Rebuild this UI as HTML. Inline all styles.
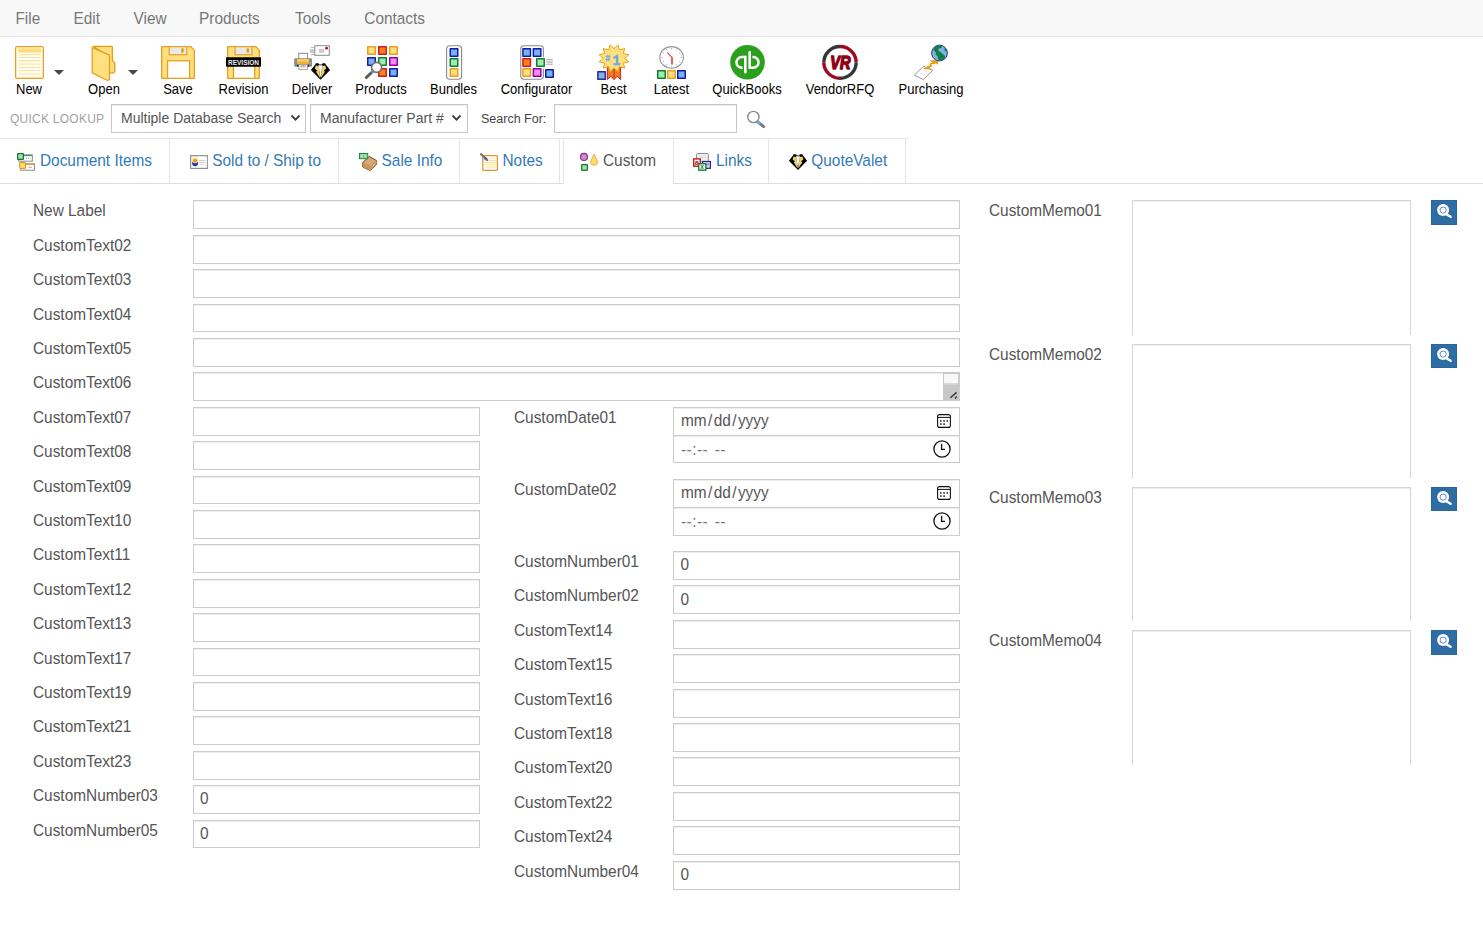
<!DOCTYPE html><html lang="en"><head><meta charset="utf-8"><title>Custom</title><style>
*{box-sizing:border-box}
html,body{margin:0;padding:0}
body{width:1483px;height:935px;overflow:hidden;background:#fff;position:relative;font-family:"Liberation Sans",sans-serif;font-size:15.4px;color:#555}
.abs{position:absolute}
.t{position:absolute;white-space:nowrap;display:block;margin:0;padding:0;font-weight:normal;text-decoration:none}
#menubar{position:absolute;left:0;top:0;width:1483px;height:37px;background:#f8f8f8;border-bottom:1px solid #e3e3e3}
.mi{font-size:15.4px;color:#777}
.tb{font-size:13px;color:#000}
.caret{position:absolute;width:0;height:0;border-left:5px solid transparent;border-right:5px solid transparent;border-top:5px solid #4a4a4a}
.ql{font-size:12px;color:#a2a2a2;letter-spacing:.25px}
.sel{position:absolute;top:104px;height:29px;border:1px solid #c6c6c6;border-radius:0;background:#fff;box-shadow:inset 0 1px 1px rgba(0,0,0,.075)}
.st{font-size:14px;color:#555}
.sf{font-size:12.5px;color:#444}
#sfi{position:absolute;left:554px;top:104px;width:183px;height:29px;border:1px solid #c6c6c6;border-radius:0;background:#fff;box-shadow:inset 0 1px 1px rgba(0,0,0,.075)}
#tabs-top{position:absolute;left:0;top:138px;width:908px;height:1px;background:#e4e4e4}
#tabs-bot{position:absolute;left:0;top:183px;width:1483px;height:1px;background:#ddd}
.vsep{position:absolute;top:139px;width:1px;height:44px;background:#e4e4e4}
.tab{font-size:15.4px;color:#337ab7}
.act{color:#555}
.lbl{font-size:15.4px;color:#555}
.inp{position:absolute;height:29px;border:1px solid #ccc;background:#fff;box-shadow:inset 0 1px 1px rgba(0,0,0,.075)}
.iv{font-size:15.4px;color:#555}
.sl{padding:0 1.4px}
.tm{color:#757575;word-spacing:2px;letter-spacing:.45px}
.memo{position:absolute;width:279px;border:1px solid #d9d5d5;border-bottom:none;background:#fff;box-shadow:inset 0 1px 1px rgba(0,0,0,.075)}
.mbtn{position:absolute;left:1431px;width:26px;height:24.3px;background:#2e6da4;border:1px solid #2a659b;overflow:hidden}
.mbtn svg{position:absolute;left:-1px;top:-1px}
</style></head><body>
<nav id="menu"><div id="menubar"></div>
<a class="t mi" style="left:15.4px;top:9.66px;line-height:18px;transform-origin:0 14.34px;transform:scaleY(1.088);">File</a>
<a class="t mi" style="left:73.5px;top:9.66px;line-height:18px;transform-origin:0 14.34px;transform:scaleY(1.088);">Edit</a>
<a class="t mi" style="left:133.5px;top:9.66px;line-height:18px;transform-origin:0 14.34px;transform:scaleY(1.088);">View</a>
<a class="t mi" style="left:199px;top:9.66px;line-height:18px;transform-origin:0 14.34px;transform:scaleY(1.088);">Products</a>
<a class="t mi" style="left:295px;top:9.66px;line-height:18px;transform-origin:0 14.34px;transform:scaleY(1.088);">Tools</a>
<a class="t mi" style="left:364.3px;top:9.66px;line-height:18px;transform-origin:0 14.34px;transform:scaleY(1.088);">Contacts</a>
</nav><section id="toolbar">
<svg class="abs" style="left:10px;top:42px" width="40" height="42" viewBox="10 42 40 42"><rect x="15.7" y="46.7" width="27.6" height="31.6" rx="1.2" fill="#fff" stroke="#E5A024" stroke-width="1.4"/><rect x="16.8" y="47.8" width="25.4" height="29.4" fill="none" stroke="#FCEBC2" stroke-width="0.9"/><rect x="18.2" y="48.4" width="22.8" height="4.2" fill="#FFDD77"/><rect x="18.6" y="53.90" width="22" height="1.0" fill="#FFE08A"/><rect x="18.6" y="57.00" width="22" height="1.0" fill="#FFDD77"/><rect x="18.6" y="60.05" width="22" height="1.5" fill="#FFE596"/><rect x="18.6" y="63.35" width="22" height="1.5" fill="#FFE9A8"/><rect x="18.6" y="66.90" width="22" height="1.0" fill="#FFDD77"/><rect x="18.6" y="70.05" width="22" height="1.1" fill="#FFE392"/><rect x="18.6" y="73.15" width="22" height="1.7" fill="#FFEDB5"/></svg>
<div class="t tb" style="left:29px;top:82.00px;line-height:15px;transform-origin:0 12.00px;transform:translateX(-50%) scaleY(1.075);">New</div>
<svg class="abs" style="left:86px;top:42px" width="36" height="42" viewBox="86 42 36 42"><path d="M93.2 46.4 H111.4 Q112.4 46.4 112.4 47.4 V60.6 L114.8 63 V71.6 L113.6 72.8 H108 V56 Z" fill="#FFDF7E" stroke="#E59E10" stroke-width="1.3" stroke-linejoin="round"/><path d="M92.2 47.6 L109.5 55.2 V79.6 L107.4 80.5 L92.2 72.8 Z" fill="#FFDF7E" stroke="#E5A024" stroke-width="1.3" stroke-linejoin="round"/></svg>
<div class="t tb" style="left:104px;top:82.00px;line-height:15px;transform-origin:0 12.00px;transform:translateX(-50%) scaleY(1.075);">Open</div>
<svg class="abs" style="left:158px;top:42px" width="42" height="42" viewBox="158 42 42 42"><path d="M161.65 46.65 H190.80 L194.35 50.40 V78.35 H161.65 Z" fill="#FFDF7E" stroke="#E5A024" stroke-width="1.3" stroke-linejoin="round"/><rect x="169.30" y="46.65" width="17.40" height="8.1" fill="#E8E8E8" stroke="#E5A024" stroke-width="1.2"/><rect x="181.20" y="48.3" width="2.50" height="4.5" rx="1" fill="#E59E00"/><rect x="167.60" y="60.8" width="22.00" height="17.55" fill="#fff" stroke="#E5A024" stroke-width="1.3"/></svg>
<div class="t tb" style="left:178px;top:82.00px;line-height:15px;transform-origin:0 12.00px;transform:translateX(-50%) scaleY(1.075);">Save</div>
<svg class="abs" style="left:222px;top:42px" width="44" height="42" viewBox="222 42 44 42"><path d="M227.65 46.65 H255.92 L259.35 50.40 V78.35 H227.65 Z" fill="#FFDF7E" stroke="#E5A024" stroke-width="1.3" stroke-linejoin="round"/><rect x="235.06" y="46.65" width="16.89" height="8.1" fill="#E8E8E8" stroke="#E5A024" stroke-width="1.2"/><rect x="246.61" y="48.3" width="2.43" height="4.5" rx="1" fill="#E59E00"/><rect x="233.41" y="60.8" width="21.35" height="17.55" fill="#fff" stroke="#E5A024" stroke-width="1.3"/><rect x="226" y="57.2" width="35" height="9.6" rx="0.8" fill="#000"/><text x="243.5" y="64.8" font-family="Liberation Sans, sans-serif" font-weight="bold" font-size="7.6" fill="#eee" text-anchor="middle" textLength="31" lengthAdjust="spacingAndGlyphs">REVISION</text></svg>
<div class="t tb" style="left:243.5px;top:82.00px;line-height:15px;transform-origin:0 12.00px;transform:translateX(-50%) scaleY(1.075);">Revision</div>
<svg class="abs" style="left:290px;top:42px" width="44" height="42" viewBox="290 42 44 42"><rect x="311" y="46.9" width="3.6" height="0.9" fill="#aaa"/><rect x="309.8" y="49.2" width="4.8" height="3.6" fill="#c4c4c4"/><rect x="311" y="54" width="3.6" height="0.9" fill="#aaa"/><rect x="314.8" y="45.7" width="14.5" height="9.6" fill="#fff" stroke="#8a8a8e" stroke-width="1"/><rect x="319" y="49.2" width="5.2" height="3.6" fill="#c0c0c0"/><rect x="319" y="50.3" width="5.2" height="0.5" fill="#e0e0e0"/><rect x="319" y="51.5" width="5.2" height="0.5" fill="#e0e0e0"/><circle cx="326.6" cy="48.2" r="1.4" fill="#CC0010"/><rect x="298.8" y="53.3" width="8.8" height="6" fill="#fff" stroke="#8a8a8e" stroke-width="1"/><rect x="294.2" y="58.2" width="17.8" height="8.6" rx="1.2" fill="#8a8a8e"/><rect x="297" y="59.2" width="12" height="4.4" fill="#FFD255"/><rect x="297" y="61.6" width="12" height="2" fill="#EDB02A"/><rect x="297" y="59.2" width="12" height="1" fill="#F5C850"/><rect x="309.9" y="61.8" width="1" height="2" fill="#8FD6A0"/><rect x="298.9" y="64.6" width="8.6" height="5" fill="#fff" stroke="#9a9a9e" stroke-width="0.8"/><rect x="297" y="64.9" width="1.5" height="1.6" fill="#222"/><rect x="307.6" y="64.9" width="1.5" height="1.6" fill="#222"/><rect x="300.6" y="65" width="1" height="2.4" fill="#4AA0E0"/><rect x="302" y="65" width="1" height="2.4" fill="#F5C030"/><rect x="303.3" y="65" width="1.2" height="2.4" fill="#F57020"/><rect x="304.9" y="65" width="0.8" height="2.4" fill="#F0A0D0"/><path d="M310.9 70.07052631578946 L315.2452631578947 64.51263157894736 Q315.44736842105266 63.0978947368421 316.66 63.3 L318.07473684210527 63.3 Q318.8831578947368 63.40105263157894 319.08526315789476 64.51263157894736 L321.91473684210524 64.51263157894736 Q322.1168421052632 63.40105263157894 322.92526315789473 63.3 L324.34 63.3 Q325.55263157894734 63.0978947368421 325.7547368421053 64.51263157894736 L330.1 70.07052631578946 L320.5 79.8 Z" fill="#000"/><path d="M315.7505263157895 65.62421052631579 L318.58 66.02842105263157 L320.2978947368421 78.2557894736842 L315.9526315789474 71.78842105263158 L317.3673684210526 70.67684210526315 L314.841052631579 68.75684210526316 Z" fill="#F2D262"/><path d="M325.2494736842105 65.62421052631579 L322.42 66.02842105263157 L320.7021052631579 78.2557894736842 L325.0473684210526 71.78842105263158 L323.6326315789474 70.67684210526315 L326.158947368421 68.75684210526316 Z" fill="#F2D262"/><path d="M318.3778947368421 65.32105263157895 L322.6221052631579 65.32105263157895 L320.6515789473684 77.04315789473684 L320.3484210526316 77.04315789473684 Z" fill="#fff"/><path d="M320.5 67.34210526315789 V72.39473684210526" stroke="#e2e2e2" stroke-width="0.35368421052631577"/></svg>
<div class="t tb" style="left:312px;top:82.00px;line-height:15px;transform-origin:0 12.00px;transform:translateX(-50%) scaleY(1.075);">Deliver</div>
<svg class="abs" style="left:362px;top:42px" width="40" height="42" viewBox="362 42 40 42"><rect x="367.75" y="46.75" width="7.5" height="7.5" fill="#FFDF7E" stroke="#E5A024" stroke-width="1.5" stroke-linejoin="round"/><rect x="378.75" y="46.75" width="7.5" height="7.5" fill="#FF7F1E" stroke="#D0201A" stroke-width="1.5" stroke-linejoin="round"/><rect x="389.75" y="46.75" width="7.5" height="7.5" fill="#FFDF7E" stroke="#E5A024" stroke-width="1.5" stroke-linejoin="round"/><rect x="367.75" y="57.75" width="7.5" height="7.5" fill="#6FB4F5" stroke="#1A1AA0" stroke-width="1.5" stroke-linejoin="round"/><rect x="378.75" y="57.75" width="7.5" height="7.5" fill="#9EEDB0" stroke="#0F7F35" stroke-width="1.5" stroke-linejoin="round"/><rect x="389.75" y="57.75" width="7.5" height="7.5" fill="#F58CF5" stroke="#990099" stroke-width="1.5" stroke-linejoin="round"/><rect x="378.75" y="68.75" width="7.5" height="7.5" fill="#FF7F1E" stroke="#D0201A" stroke-width="1.5" stroke-linejoin="round"/><rect x="389.75" y="68.75" width="7.5" height="7.5" fill="#6FB4F5" stroke="#1A1AA0" stroke-width="1.5" stroke-linejoin="round"/><path d="M373.4 70.8 L366.2 77.6" stroke="#625a5a" stroke-width="2.9" stroke-linecap="round"/><path d="M373.6 70.6 L371.6 72.5" stroke="#5AB0E8" stroke-width="2.2"/><circle cx="376.6" cy="67.4" r="5.05" fill="#fff" stroke="#767272" stroke-width="1.7"/></svg>
<div class="t tb" style="left:381px;top:82.00px;line-height:15px;transform-origin:0 12.00px;transform:translateX(-50%) scaleY(1.075);">Products</div>
<svg class="abs" style="left:440px;top:42px" width="28" height="42" viewBox="440 42 28 42"><rect x="446.6" y="45.7" width="15" height="33.6" rx="3.2" fill="#fff" stroke="#8a8a8e" stroke-width="1.1"/><rect x="450.25" y="48.75" width="7.5" height="7.5" fill="#6FB4F5" stroke="#1A1AA0" stroke-width="1.5" stroke-linejoin="round"/><rect x="450.25" y="58.75" width="7.5" height="7.5" fill="#9EEDB0" stroke="#0F7F35" stroke-width="1.5" stroke-linejoin="round"/><rect x="450.25" y="68.75" width="7.5" height="7.5" fill="#FFDF7E" stroke="#E5A024" stroke-width="1.5" stroke-linejoin="round"/></svg>
<div class="t tb" style="left:453.5px;top:82.00px;line-height:15px;transform-origin:0 12.00px;transform:translateX(-50%) scaleY(1.075);">Bundles</div>
<svg class="abs" style="left:516px;top:42px" width="42" height="42" viewBox="516 42 42 42"><rect x="520.8" y="45.7" width="22.6" height="33.6" rx="3.2" fill="#fff" stroke="#8a8a8e" stroke-width="1.1"/><rect x="542" y="57" width="4" height="11.5" fill="#fff"/><rect x="522.95" y="48.75" width="7.5" height="7.5" fill="#6FB4F5" stroke="#1A1AA0" stroke-width="1.5" stroke-linejoin="round"/><rect x="533.35" y="48.75" width="7.5" height="7.5" fill="#6FB4F5" stroke="#1A1AA0" stroke-width="1.5" stroke-linejoin="round"/><rect x="522.95" y="58.75" width="7.5" height="7.5" fill="#FF7F1E" stroke="#D0201A" stroke-width="1.5" stroke-linejoin="round"/><rect x="536.75" y="58.75" width="7.5" height="7.5" fill="#9EEDB0" stroke="#0F7F35" stroke-width="1.5" stroke-linejoin="round"/><rect x="522.95" y="68.75" width="7.5" height="7.5" fill="#FFDF7E" stroke="#E5A024" stroke-width="1.5" stroke-linejoin="round"/><rect x="533.35" y="68.75" width="7.5" height="7.5" fill="#F58CF5" stroke="#990099" stroke-width="1.5" stroke-linejoin="round"/><rect x="545.75" y="69.75" width="7.5" height="7.5" fill="#6FB4F5" stroke="#1A1AA0" stroke-width="1.5" stroke-linejoin="round"/><rect x="546.2" y="59.2" width="6.6" height="1" fill="#aaa"/><rect x="546.2" y="60.6" width="6.6" height="2.8" fill="#d0d0d0"/><rect x="546.2" y="63.8" width="6.6" height="1" fill="#b4b4b4"/></svg>
<div class="t tb" style="left:536.5px;top:82.00px;line-height:15px;transform-origin:0 12.00px;transform:translateX(-50%) scaleY(1.075);">Configurator</div>
<svg class="abs" style="left:594px;top:42px" width="40" height="42" viewBox="594 42 40 42"><path d="M607.4 66 V79.6 L610.7 76.2 L614 79.6 L617.3 76.2 L620.6 79.6 V66 Z" fill="#F07A22" stroke="#CC2020" stroke-width="1" stroke-linejoin="miter"/><rect x="613.3" y="68" width="1.5" height="10" fill="#D9402A"/><polygon points="617.99,44.97 619.30,49.90 624.89,48.54 623.18,53.45 628.88,54.73 624.60,58.30 628.88,61.87 623.18,63.15 624.89,68.06 619.30,66.70 617.99,71.63 614.00,68.00 610.01,71.63 608.70,66.70 603.11,68.06 604.82,63.15 599.12,61.87 603.40,58.30 599.12,54.73 604.82,53.45 603.11,48.54 608.70,49.90 610.01,44.97 614.00,48.60" fill="#FFE07E" stroke="#E8A317" stroke-width="1" stroke-linejoin="miter"/><text x="605.2" y="60.6" font-family="Liberation Mono, monospace" font-weight="bold" font-size="8.4" fill="#6AA8E8" stroke="#6AA8E8" stroke-width="0.3">#</text><text x="612.4" y="64.7" font-family="Liberation Mono, monospace" font-weight="bold" font-size="15.2" fill="#6AA8E8" stroke="#6AA8E8" stroke-width="0.5" textLength="7.8" lengthAdjust="spacingAndGlyphs">1</text><rect x="597.85" y="71.75" width="7.5" height="7.5" fill="#7BB3E6" stroke="#2B2B8F" stroke-width="1.5" stroke-linejoin="round"/></svg>
<div class="t tb" style="left:613.5px;top:82.00px;line-height:15px;transform-origin:0 12.00px;transform:translateX(-50%) scaleY(1.075);">Best</div>
<svg class="abs" style="left:652px;top:42px" width="40" height="42" viewBox="652 42 40 42"><ellipse cx="671.6" cy="57.4" rx="11.8" ry="10.8" fill="#fff" stroke="#999" stroke-width="1.15"/><path d="M671.60 49.17 L671.60 48.19" stroke="#8c8c8c" stroke-width="0.9"/><path d="M676.09 50.27 L676.63 49.42" stroke="#8c8c8c" stroke-width="0.9"/><path d="M679.38 53.28 L680.31 52.79" stroke="#8c8c8c" stroke-width="0.9"/><path d="M680.59 57.40 L681.66 57.40" stroke="#8c8c8c" stroke-width="0.9"/><path d="M679.38 61.52 L680.31 62.01" stroke="#8c8c8c" stroke-width="0.9"/><path d="M676.09 64.53 L676.63 65.38" stroke="#8c8c8c" stroke-width="0.9"/><path d="M671.60 65.63 L671.60 66.61" stroke="#8c8c8c" stroke-width="0.9"/><path d="M667.11 64.53 L666.57 65.38" stroke="#8c8c8c" stroke-width="0.9"/><path d="M663.82 61.52 L662.89 62.01" stroke="#8c8c8c" stroke-width="0.9"/><path d="M662.61 57.40 L661.54 57.40" stroke="#8c8c8c" stroke-width="0.9"/><path d="M663.82 53.28 L662.89 52.79" stroke="#8c8c8c" stroke-width="0.9"/><path d="M667.11 50.27 L666.57 49.42" stroke="#8c8c8c" stroke-width="0.9"/><path d="M672 57.2 V64.6" stroke="#D9534F" stroke-width="1.8"/><path d="M672.2 57.6 L667.2 52.4" stroke="#D9534F" stroke-width="1.2"/><rect x="657.75" y="70.75" width="7.5" height="7.5" fill="#9EEDB0" stroke="#0F7F35" stroke-width="1.5" stroke-linejoin="round"/><rect x="667.75" y="70.75" width="7.5" height="7.5" fill="#FFDF7E" stroke="#E5A024" stroke-width="1.5" stroke-linejoin="round"/><rect x="677.75" y="70.75" width="7.5" height="7.5" fill="#6FB4F5" stroke="#1A1AA0" stroke-width="1.5" stroke-linejoin="round"/></svg>
<div class="t tb" style="left:671.5px;top:82.00px;line-height:15px;transform-origin:0 12.00px;transform:translateX(-50%) scaleY(1.075);">Latest</div>
<svg class="abs" style="left:728px;top:42px" width="40" height="42" viewBox="728 42 40 42"><circle cx="747.5" cy="62.2" r="17.3" fill="#2CA01C"/><path d="M745.3 57 H741.8 A5.35 5.35 0 0 0 741.8 67.7 H742.6" fill="none" stroke="#fff" stroke-width="2.5"/><path d="M745.3 55.75 V72.2" stroke="#fff" stroke-width="2.6"/><circle cx="745.3" cy="72.2" r="1.3" fill="#fff"/><path d="M749.7 67.7 H753.2 A5.35 5.35 0 0 0 753.2 57 H752.4" fill="none" stroke="#fff" stroke-width="2.5"/><path d="M749.7 52.4 V68.95" stroke="#fff" stroke-width="2.6"/><circle cx="749.7" cy="52.4" r="1.3" fill="#fff"/></svg>
<div class="t tb" style="left:747px;top:82.00px;line-height:15px;transform-origin:0 12.00px;transform:translateX(-50%) scaleY(1.075);">QuickBooks</div>
<svg class="abs" style="left:820px;top:42px" width="40" height="42" viewBox="820 42 40 42"><path d="M823.85 62.4 A16.15 15.85 0 0 1 840.0 46.55" fill="none" stroke="#333638" stroke-width="3.4"/><path d="M840.0 46.55 A16.15 15.85 0 0 1 856.15 62.4" fill="none" stroke="#9E0B20" stroke-width="3.4"/><path d="M856.15 62.4 A16.15 15.85 0 0 1 840.0 78.25" fill="none" stroke="#333638" stroke-width="3.4"/><path d="M840.0 78.25 A16.15 15.85 0 0 1 823.85 62.4" fill="none" stroke="#9E0B20" stroke-width="3.4"/><text x="840.3" y="68.7" font-family="Liberation Sans, sans-serif" font-weight="bold" font-style="italic" font-size="17.6" fill="#8E0012" stroke="#8E0012" stroke-width="1.5" stroke-linejoin="round" text-anchor="middle" textLength="20.2" lengthAdjust="spacingAndGlyphs">VR</text></svg>
<div class="t tb" style="left:840px;top:82.00px;line-height:15px;transform-origin:0 12.00px;transform:translateX(-50%) scaleY(1.075);">VendorRFQ</div>
<svg class="abs" style="left:910px;top:42px" width="42" height="42" viewBox="910 42 42 42"><path d="M923.8 66.2 L932.8 70.4 L923.2 79.5 L914.3 75.2 Z" fill="#fff" stroke="#8a8a8a" stroke-width="0.9" stroke-linejoin="round"/><path d="M923.6 71 L927.4 72.6 M921.6 73 L925 74.6" stroke="#ddd" stroke-width="0.8"/><path d="M924.4 68.5 H929.9 L927.8 66.7 L931.4 66 L930 64.1 L934.2 62.6" fill="none" stroke="#E59E0F" stroke-width="1.5" stroke-linejoin="round" stroke-linecap="round"/><path d="M929.3 60.2 H938 V64.9 L935.8 63.2 L933.2 64.4 L932 61.9 Z" fill="#E59E0F"/><circle cx="939.5" cy="53" r="7.9" fill="#7EB2E4" stroke="#22228B" stroke-width="0.9"/><path d="M933.2 50 Q934.5 46.5 938.5 45.6 L942 46 L941.5 48 L938.8 48.6 L938.2 50.6 L941 52.6 L944.6 55.6 L945.4 57.6 L943 59.6 L940 60.6 L938 59 L937.6 56 L935.6 54.8 L936 52.4 Z" fill="#0E8040"/><path d="M944.6 47.6 L946.6 50.2 L946 52 L944.4 50 Z" fill="#0E8040"/></svg>
<div class="t tb" style="left:931px;top:82.00px;line-height:15px;transform-origin:0 12.00px;transform:translateX(-50%) scaleY(1.075);">Purchasing</div>
<div class="caret" style="left:54px;top:70px"></div><div class="caret" style="left:128px;top:70px"></div>
</section><section id="quick-lookup">
<div class="t ql" style="left:10px;top:111.84px;line-height:14px;transform-origin:0 11.16px;transform:scaleY(1.047);">QUICK LOOKUP</div>
<div class="sel" style="left:111px;width:195px"></div><div class="t st" style="left:121px;top:110.15px;line-height:16px;transform-origin:0 12.85px;transform:none;">Multiple Database Search</div><svg class="abs" width="11" height="8" viewBox="0 0 11 8" style="left:290.3px;top:114px"><path d="M1.5 1.5 L5.5 5.7 L9.5 1.5" fill="none" stroke="#444" stroke-width="1.9"/></svg>
<div class="sel" style="left:310px;width:158px"></div><div class="t st" style="left:320px;top:110.15px;line-height:16px;transform-origin:0 12.85px;transform:none;">Manufacturer Part #</div><svg class="abs" width="11" height="8" viewBox="0 0 11 8" style="left:451.3px;top:114px"><path d="M1.5 1.5 L5.5 5.7 L9.5 1.5" fill="none" stroke="#444" stroke-width="1.9"/></svg>
<div class="t sf" style="left:481px;top:111.67px;line-height:14px;transform-origin:0 11.33px;transform:none;">Search For:</div><div id="sfi"></div>
<svg class="abs" style="left:745px;top:108px" width="24" height="24" viewBox="745 108 24 24"><path d="M757.8 121.8 L763.6 126.6" stroke="#7a7a7a" stroke-width="3" stroke-linecap="round"/><path d="M757.3 121.4 L760 123.7" stroke="#5AB0F0" stroke-width="3"/><circle cx="753.4" cy="117" r="5.6" fill="#fff" stroke="#888" stroke-width="1.4"/></svg>
</section><nav id="tabs">
<div id="tabs-top"></div><div id="tabs-bot"></div>
<div class="vsep" style="left:169px"></div>
<div class="vsep" style="left:338px"></div>
<div class="vsep" style="left:459px"></div>
<div class="vsep" style="left:559px"></div>
<div class="vsep" style="left:563px"></div>
<div class="vsep" style="left:673px"></div>
<div class="vsep" style="left:768px"></div>
<div class="vsep" style="left:905px"></div>
<div class="abs" style="left:564px;top:183px;width:109px;height:1px;background:#fff"></div>
<svg class="abs" style="left:14px;top:150px" width="24" height="24" viewBox="14 150 24 24"><rect x="18.7" y="154.8" width="13.6" height="6.4" fill="#fff" stroke="#8a888a" stroke-width="1"/><rect x="24" y="155.1" width="7.8" height="1" fill="#2E8B50"/><rect x="26" y="157.8" width="1" height="1.2" fill="#aaa"/><rect x="28" y="157.8" width="1.6" height="1.2" fill="#bbb"/><rect x="17.6" y="153.6" width="5.8" height="5.8" rx="0.6" fill="#A8DDB0" stroke="#0B7A2A" stroke-width="1.2"/><rect x="20.8" y="163.8" width="13.6" height="6.4" fill="#fff" stroke="#8a888a" stroke-width="1"/><rect x="26" y="164.1" width="7.8" height="1" fill="#E5A024"/><rect x="28.4" y="166.8" width="3.4" height="1.2" fill="#bbb"/><rect x="19.7" y="162.6" width="5.8" height="5.8" rx="0.6" fill="#FFDF7E" stroke="#E5A024" stroke-width="1.2"/></svg>
<a class="t tab" style="left:40px;top:151.66px;line-height:18px;transform-origin:0 14.34px;transform:scaleY(1.088);">Document Items</a>
<svg class="abs" style="left:186px;top:150px" width="26" height="24" viewBox="186 150 26 24"><rect x="190.6" y="155.7" width="16.7" height="12.7" fill="#f6f6f6" stroke="#8a888a" stroke-width="1.1"/><rect x="198.2" y="156.8" width="8.4" height="10.4" fill="#fff"/><path d="M192 162.2 H198.2 A3.1 4.1 0 0 1 192 162.2 Z" fill="#2F2F9F"/><ellipse cx="195.1" cy="162.6" rx="1.6" ry="0.8" fill="#9FD0F5"/><ellipse cx="195.1" cy="160.2" rx="2.9" ry="2.5" fill="#FFD75E"/><ellipse cx="195.1" cy="160.6" rx="2" ry="1.5" fill="#E5961F"/><rect x="199.2" y="160" width="6.6" height="0.9" fill="#ccc"/><rect x="199.2" y="162.1" width="6.6" height="0.9" fill="#ccc"/><rect x="199.2" y="164.2" width="6.6" height="0.9" fill="#ddd"/></svg>
<a class="t tab" style="left:212.3px;top:151.66px;line-height:18px;transform-origin:0 14.34px;transform:scaleY(1.088);">Sold to / Ship to</a>
<svg class="abs" style="left:356px;top:150px" width="24" height="24" viewBox="356 150 24 24"><path d="M369.2 156.4 L376.6 160.6 V164.6 L370.2 170.5 L362.7 167 V162.6 Z" fill="#D9A778" stroke="#6B4A1E" stroke-width="1" stroke-linejoin="round"/><path d="M362.7 162.6 L370.2 166.4 V170.5 L362.7 167 Z" fill="#C99660"/><path d="M376.6 160.6 L370.2 166.4 V170.5 L376.6 164.6 Z" fill="#CE9A64"/><path d="M362.7 162.6 L370.2 166.4 L376.6 160.6" fill="none" stroke="#c08f5e" stroke-width="0.5"/><path d="M372.6 165.2 L374.8 163.2 V164.6 L372.6 166.6 Z" fill="#9EE8A8"/><rect x="359.5" y="153.5" width="8.2" height="5.2" fill="#8FD49A" stroke="#1A8A3A" stroke-width="1"/><ellipse cx="363.6" cy="156.2" rx="2.4" ry="1.6" fill="#C0F0C4"/><ellipse cx="363.6" cy="156.4" rx="0.9" ry="1.2" fill="#5AAE70"/></svg>
<a class="t tab" style="left:381.6px;top:151.66px;line-height:18px;transform-origin:0 14.34px;transform:scaleY(1.088);">Sale Info</a>
<svg class="abs" style="left:478px;top:150px" width="24" height="24" viewBox="478 150 24 24"><rect x="482.8" y="155.7" width="14.6" height="14.6" rx="0.8" fill="#fff" stroke="#E5962B" stroke-width="1.3"/><rect x="489.2" y="157.7" width="6.5" height="1" fill="#FFE596"/><rect x="489.2" y="159.9" width="6.5" height="1" fill="#FFE08A"/><rect x="484.9" y="162" width="10.8" height="1" fill="#FFDD77"/><rect x="484.9" y="164" width="10.8" height="1.2" fill="#FFE596"/><rect x="484.9" y="166" width="10.8" height="1.8" fill="#FFF0C4"/><path d="M481 154.2 L487 159.8" stroke="#7a7a7a" stroke-width="2.3" stroke-linecap="round"/><path d="M484.8 157.8 L486.4 159.3" stroke="#4040B0" stroke-width="2.3"/><path d="M486.5 159.4 L487.2 160" stroke="#7a7a7a" stroke-width="2.3" stroke-linecap="round"/></svg>
<a class="t tab" style="left:502.5px;top:151.66px;line-height:18px;transform-origin:0 14.34px;transform:scaleY(1.088);">Notes</a>
<svg class="abs" style="left:578px;top:150px" width="24" height="24" viewBox="578 150 24 24"><circle cx="584" cy="156.9" r="3.5" fill="#D08CC8" stroke="#8B2A8B" stroke-width="1.1"/><rect x="581.7" y="164.7" width="5.7" height="5.6" rx="0.5" fill="#A8DDB0" stroke="#0B7A2A" stroke-width="1.2"/><path d="M594.1 154.3 Q594.9 156.6 596.7 159.6 Q598.6 162.8 596.6 164.5 Q594.1 166 591.6 164.5 Q589.6 162.8 591.5 159.6 Q593.3 156.6 594.1 154.3 Z" fill="#FFDD6E" stroke="#E5A024" stroke-width="0.9"/></svg>
<a class="t tab act" style="left:603px;top:151.66px;line-height:18px;transform-origin:0 14.34px;transform:scaleY(1.088);">Custom</a>
<svg class="abs" style="left:690px;top:150px" width="24" height="24" viewBox="690 150 24 24"><rect x="696.6" y="153.5" width="11.7" height="8.4" rx="1" fill="#efefef" stroke="#8a888a" stroke-width="1"/><rect x="699" y="155.4" width="7" height="0.8" fill="#ddd"/><rect x="699" y="157.2" width="7" height="0.8" fill="#ddd"/><rect x="693.7" y="158.9" width="6.6" height="7.3" fill="#fff" stroke="#C01010" stroke-width="1.3"/><text x="694.8" y="165.2" font-family="Liberation Sans, sans-serif" font-weight="bold" font-size="7.5" fill="#C01010">a</text><rect x="702.6" y="161.5" width="7.8" height="6.8" fill="#dcdcf2" stroke="#22228B" stroke-width="1.2"/><path d="M706 164.8 H708.2 V163.2" fill="none" stroke="#6a6ab0" stroke-width="0.9"/><rect x="698.8" y="163.7" width="7.1" height="6.5" fill="#fff" stroke="#0B7A2A" stroke-width="1.3"/><text x="700.2" y="169.2" font-family="Liberation Sans, sans-serif" font-weight="bold" font-size="6.5" fill="#0B7A2A">x</text></svg>
<a class="t tab" style="left:716px;top:151.66px;line-height:18px;transform-origin:0 14.34px;transform:scaleY(1.088);">Links</a>
<svg class="abs" style="left:786px;top:150px" width="24" height="24" viewBox="786 150 24 24"><path d="M788.9 160.7178947368421 L793.0189473684211 155.44947368421055 Q793.2105263157895 154.1084210526316 794.36 154.3 L795.7010526315789 154.3 Q796.4673684210526 154.39578947368423 796.6589473684211 155.44947368421055 L799.3410526315789 155.44947368421055 Q799.5326315789474 154.39578947368423 800.2989473684211 154.3 L801.64 154.3 Q802.7894736842105 154.1084210526316 802.9810526315789 155.44947368421055 L807.1 160.7178947368421 L798 170.0 Z" fill="#000"/><path d="M793.4978947368421 156.50315789473686 L796.18 156.88631578947368 L797.8084210526316 168.47684210526316 L793.6894736842105 162.3463157894737 L795.0305263157895 161.29263157894738 L792.6357894736842 159.4726315789474 Z" fill="#F2D262"/><path d="M802.5021052631579 156.50315789473686 L799.82 156.88631578947368 L798.1915789473684 168.47684210526316 L802.3105263157895 162.3463157894737 L800.9694736842105 161.29263157894738 L803.3642105263158 159.4726315789474 Z" fill="#F2D262"/><path d="M795.9884210526316 156.21578947368423 L800.0115789473684 156.21578947368423 L798.1436842105263 167.32736842105265 L797.8563157894737 167.32736842105265 Z" fill="#fff"/><path d="M798 158.13157894736844 V162.92105263157896" stroke="#e2e2e2" stroke-width="0.3352631578947368"/></svg>
<a class="t tab" style="left:811.3px;top:151.66px;line-height:18px;transform-origin:0 14.34px;transform:scaleY(1.088);">QuoteValet</a>
</nav><main id="custom-form"><section id="col-left">
<label class="t lbl" style="left:33px;top:201.66px;line-height:18px;transform-origin:0 14.34px;transform:scaleY(1.088);">New Label</label>
<div class="inp" style="left:193px;top:200.4px;width:767px;height:28.8px"></div>
<label class="t lbl" style="left:33px;top:236.66px;line-height:18px;transform-origin:0 14.34px;transform:scaleY(1.088);">CustomText02</label>
<div class="inp" style="left:193px;top:234.8px;width:767px;height:28.8px"></div>
<label class="t lbl" style="left:33px;top:270.66px;line-height:18px;transform-origin:0 14.34px;transform:scaleY(1.088);">CustomText03</label>
<div class="inp" style="left:193px;top:269.2px;width:767px;height:28.8px"></div>
<label class="t lbl" style="left:33px;top:305.66px;line-height:18px;transform-origin:0 14.34px;transform:scaleY(1.088);">CustomText04</label>
<div class="inp" style="left:193px;top:303.6px;width:767px;height:28.8px"></div>
<label class="t lbl" style="left:33px;top:339.66px;line-height:18px;transform-origin:0 14.34px;transform:scaleY(1.088);">CustomText05</label>
<div class="inp" style="left:193px;top:338.0px;width:767px;height:28.8px"></div>
<label class="t lbl" style="left:33px;top:373.66px;line-height:18px;transform-origin:0 14.34px;transform:scaleY(1.088);">CustomText06</label>
<div class="inp" style="left:193px;top:372.4px;width:767px;height:28.8px"></div>
<label class="t lbl" style="left:33px;top:408.66px;line-height:18px;transform-origin:0 14.34px;transform:scaleY(1.088);">CustomText07</label>
<div class="inp" style="left:193px;top:406.8px;width:287px;height:28.8px"></div>
<label class="t lbl" style="left:33px;top:442.66px;line-height:18px;transform-origin:0 14.34px;transform:scaleY(1.088);">CustomText08</label>
<div class="inp" style="left:193px;top:441.2px;width:287px;height:28.8px"></div>
<label class="t lbl" style="left:33px;top:477.66px;line-height:18px;transform-origin:0 14.34px;transform:scaleY(1.088);">CustomText09</label>
<div class="inp" style="left:193px;top:475.6px;width:287px;height:28.8px"></div>
<label class="t lbl" style="left:33px;top:511.66px;line-height:18px;transform-origin:0 14.34px;transform:scaleY(1.088);">CustomText10</label>
<div class="inp" style="left:193px;top:510.0px;width:287px;height:28.8px"></div>
<label class="t lbl" style="left:33px;top:545.66px;line-height:18px;transform-origin:0 14.34px;transform:scaleY(1.088);">CustomText11</label>
<div class="inp" style="left:193px;top:544.4px;width:287px;height:28.8px"></div>
<label class="t lbl" style="left:33px;top:580.66px;line-height:18px;transform-origin:0 14.34px;transform:scaleY(1.088);">CustomText12</label>
<div class="inp" style="left:193px;top:578.8px;width:287px;height:28.8px"></div>
<label class="t lbl" style="left:33px;top:614.66px;line-height:18px;transform-origin:0 14.34px;transform:scaleY(1.088);">CustomText13</label>
<div class="inp" style="left:193px;top:613.2px;width:287px;height:28.8px"></div>
<label class="t lbl" style="left:33px;top:649.66px;line-height:18px;transform-origin:0 14.34px;transform:scaleY(1.088);">CustomText17</label>
<div class="inp" style="left:193px;top:647.6px;width:287px;height:28.8px"></div>
<label class="t lbl" style="left:33px;top:683.66px;line-height:18px;transform-origin:0 14.34px;transform:scaleY(1.088);">CustomText19</label>
<div class="inp" style="left:193px;top:682.0px;width:287px;height:28.8px"></div>
<label class="t lbl" style="left:33px;top:717.66px;line-height:18px;transform-origin:0 14.34px;transform:scaleY(1.088);">CustomText21</label>
<div class="inp" style="left:193px;top:716.4px;width:287px;height:28.8px"></div>
<label class="t lbl" style="left:33px;top:752.66px;line-height:18px;transform-origin:0 14.34px;transform:scaleY(1.088);">CustomText23</label>
<div class="inp" style="left:193px;top:750.8px;width:287px;height:28.8px"></div>
<label class="t lbl" style="left:33px;top:786.66px;line-height:18px;transform-origin:0 14.34px;transform:scaleY(1.088);">CustomNumber03</label>
<div class="inp" style="left:193px;top:785.2px;width:287px;height:28.8px"></div>
<div class="t iv" style="left:200px;top:789.66px;line-height:18px;transform-origin:0 14.34px;transform:scaleY(1.088);">0</div>
<label class="t lbl" style="left:33px;top:821.66px;line-height:18px;transform-origin:0 14.34px;transform:scaleY(1.088);">CustomNumber05</label>
<div class="inp" style="left:193px;top:819.6px;width:287px;height:28.8px"></div>
<div class="t iv" style="left:200px;top:824.66px;line-height:18px;transform-origin:0 14.34px;transform:scaleY(1.088);">0</div>
<svg class="abs" style="left:942px;top:372px" width="18" height="29" viewBox="942 372 18 29"><rect x="943" y="373" width="16" height="27" fill="#c8c8c8"/><rect x="944" y="374" width="14" height="9.4" fill="#f8f8f8"/><rect x="944" y="383.8" width="14" height="1" fill="#d6d6d6"/><path d="M950.4 397.8 L956.6 392.4 M955 398.6 L956.8 396.6" stroke="#3a3a3a" stroke-width="1.5"/></svg>
</section><section id="col-mid">
<label class="t lbl" style="left:514px;top:408.66px;line-height:18px;transform-origin:0 14.34px;transform:scaleY(1.088);">CustomDate01</label>
<div class="inp" style="left:673px;top:407.0px;width:287px;height:29px"></div>
<div class="inp" style="left:673px;top:435.0px;width:287px;height:28px"></div>
<div class="t iv" style="left:681px;top:411.66px;line-height:18px;transform-origin:0 14.34px;transform:scaleY(1.088);">mm<span class="sl">/</span>dd<span class="sl">/</span>yyyy</div>
<div class="t iv tm" style="left:681px;top:440.66px;line-height:18px;transform-origin:0 14.34px;transform:scaleY(1.088);">--:-- --</div>
<svg class="abs" style="left:937px;top:414.2px" width="14" height="14" viewBox="0 0 14 14"><rect x="0.6" y="0.6" width="12.8" height="12.8" rx="2" fill="none" stroke="#111" stroke-width="1.1"/><path d="M0.6 3.4 H13.4" stroke="#111" stroke-width="1"/><rect x="3.1" y="6.2" width="1.5" height="1.5" fill="#111"/><rect x="6.3" y="6.2" width="1.5" height="1.5" fill="#111"/><rect x="9.5" y="6.2" width="1.5" height="1.5" fill="#111"/><rect x="3.1" y="9.3" width="1.5" height="1.5" fill="#111"/><rect x="6.3" y="9.3" width="1.5" height="1.5" fill="#111"/></svg>
<svg class="abs" style="left:933px;top:440.0px" width="18" height="18" viewBox="0 0 18 18"><circle cx="9" cy="9" r="8.1" fill="none" stroke="#111" stroke-width="1.3"/><path d="M8.6 3.8 V9.3 H12" fill="none" stroke="#111" stroke-width="1.3"/></svg>
<label class="t lbl" style="left:514px;top:480.66px;line-height:18px;transform-origin:0 14.34px;transform:scaleY(1.088);">CustomDate02</label>
<div class="inp" style="left:673px;top:479.0px;width:287px;height:29px"></div>
<div class="inp" style="left:673px;top:507.0px;width:287px;height:29px"></div>
<div class="t iv" style="left:681px;top:483.66px;line-height:18px;transform-origin:0 14.34px;transform:scaleY(1.088);">mm<span class="sl">/</span>dd<span class="sl">/</span>yyyy</div>
<div class="t iv tm" style="left:681px;top:512.66px;line-height:18px;transform-origin:0 14.34px;transform:scaleY(1.088);">--:-- --</div>
<svg class="abs" style="left:937px;top:486.2px" width="14" height="14" viewBox="0 0 14 14"><rect x="0.6" y="0.6" width="12.8" height="12.8" rx="2" fill="none" stroke="#111" stroke-width="1.1"/><path d="M0.6 3.4 H13.4" stroke="#111" stroke-width="1"/><rect x="3.1" y="6.2" width="1.5" height="1.5" fill="#111"/><rect x="6.3" y="6.2" width="1.5" height="1.5" fill="#111"/><rect x="9.5" y="6.2" width="1.5" height="1.5" fill="#111"/><rect x="3.1" y="9.3" width="1.5" height="1.5" fill="#111"/><rect x="6.3" y="9.3" width="1.5" height="1.5" fill="#111"/></svg>
<svg class="abs" style="left:933px;top:512.0px" width="18" height="18" viewBox="0 0 18 18"><circle cx="9" cy="9" r="8.1" fill="none" stroke="#111" stroke-width="1.3"/><path d="M8.6 3.8 V9.3 H12" fill="none" stroke="#111" stroke-width="1.3"/></svg>
<label class="t lbl" style="left:514px;top:552.66px;line-height:18px;transform-origin:0 14.34px;transform:scaleY(1.088);">CustomNumber01</label>
<div class="inp" style="left:673px;top:551.0px;width:287px;height:29px"></div>
<div class="t iv" style="left:680.6px;top:555.66px;line-height:18px;transform-origin:0 14.34px;transform:scaleY(1.088);">0</div>
<label class="t lbl" style="left:514px;top:586.66px;line-height:18px;transform-origin:0 14.34px;transform:scaleY(1.088);">CustomNumber02</label>
<div class="inp" style="left:673px;top:585.0px;width:287px;height:29px"></div>
<div class="t iv" style="left:680.6px;top:590.66px;line-height:18px;transform-origin:0 14.34px;transform:scaleY(1.088);">0</div>
<label class="t lbl" style="left:514px;top:621.66px;line-height:18px;transform-origin:0 14.34px;transform:scaleY(1.088);">CustomText14</label>
<div class="inp" style="left:673px;top:620.0px;width:287px;height:29px"></div>
<label class="t lbl" style="left:514px;top:655.66px;line-height:18px;transform-origin:0 14.34px;transform:scaleY(1.088);">CustomText15</label>
<div class="inp" style="left:673px;top:654.0px;width:287px;height:29px"></div>
<label class="t lbl" style="left:514px;top:690.66px;line-height:18px;transform-origin:0 14.34px;transform:scaleY(1.088);">CustomText16</label>
<div class="inp" style="left:673px;top:689.0px;width:287px;height:29px"></div>
<label class="t lbl" style="left:514px;top:724.66px;line-height:18px;transform-origin:0 14.34px;transform:scaleY(1.088);">CustomText18</label>
<div class="inp" style="left:673px;top:723.0px;width:287px;height:29px"></div>
<label class="t lbl" style="left:514px;top:758.66px;line-height:18px;transform-origin:0 14.34px;transform:scaleY(1.088);">CustomText20</label>
<div class="inp" style="left:673px;top:757.0px;width:287px;height:29px"></div>
<label class="t lbl" style="left:514px;top:793.66px;line-height:18px;transform-origin:0 14.34px;transform:scaleY(1.088);">CustomText22</label>
<div class="inp" style="left:673px;top:792.0px;width:287px;height:29px"></div>
<label class="t lbl" style="left:514px;top:827.66px;line-height:18px;transform-origin:0 14.34px;transform:scaleY(1.088);">CustomText24</label>
<div class="inp" style="left:673px;top:826.0px;width:287px;height:29px"></div>
<label class="t lbl" style="left:514px;top:862.66px;line-height:18px;transform-origin:0 14.34px;transform:scaleY(1.088);">CustomNumber04</label>
<div class="inp" style="left:673px;top:861.0px;width:287px;height:29px"></div>
<div class="t iv" style="left:680.6px;top:865.66px;line-height:18px;transform-origin:0 14.34px;transform:scaleY(1.088);">0</div>
</section><section id="col-memo">
<label class="t lbl" style="left:989px;top:201.66px;line-height:18px;transform-origin:0 14.34px;transform:scaleY(1.088);">CustomMemo01</label>
<div class="memo" style="left:1132px;top:200px;height:135px"></div>
<div class="mbtn" style="top:200.4px"><svg width="26" height="25" viewBox="0 0 26 25"><path d="M14.8 13.9 L19.6 16.8" stroke="#fff" stroke-width="2.4" stroke-linecap="round"/><circle cx="12.1" cy="10.1" r="6" fill="#fff"/><circle cx="12.1" cy="10.1" r="3.1" fill="none" stroke="#3a6fc0" stroke-width="0.8"/></svg></div>
<label class="t lbl" style="left:989px;top:345.66px;line-height:18px;transform-origin:0 14.34px;transform:scaleY(1.088);">CustomMemo02</label>
<div class="memo" style="left:1132px;top:344px;height:134px"></div>
<div class="mbtn" style="top:343.7px"><svg width="26" height="25" viewBox="0 0 26 25"><path d="M14.8 13.9 L19.6 16.8" stroke="#fff" stroke-width="2.4" stroke-linecap="round"/><circle cx="12.1" cy="10.1" r="6" fill="#fff"/><circle cx="12.1" cy="10.1" r="3.1" fill="none" stroke="#3a6fc0" stroke-width="0.8"/></svg></div>
<label class="t lbl" style="left:989px;top:488.66px;line-height:18px;transform-origin:0 14.34px;transform:scaleY(1.088);">CustomMemo03</label>
<div class="memo" style="left:1132px;top:487px;height:134px"></div>
<div class="mbtn" style="top:487.0px"><svg width="26" height="25" viewBox="0 0 26 25"><path d="M14.8 13.9 L19.6 16.8" stroke="#fff" stroke-width="2.4" stroke-linecap="round"/><circle cx="12.1" cy="10.1" r="6" fill="#fff"/><circle cx="12.1" cy="10.1" r="3.1" fill="none" stroke="#3a6fc0" stroke-width="0.8"/></svg></div>
<label class="t lbl" style="left:989px;top:631.66px;line-height:18px;transform-origin:0 14.34px;transform:scaleY(1.088);">CustomMemo04</label>
<div class="memo" style="left:1132px;top:630px;height:135px"></div>
<div class="mbtn" style="top:630.3px"><svg width="26" height="25" viewBox="0 0 26 25"><path d="M14.8 13.9 L19.6 16.8" stroke="#fff" stroke-width="2.4" stroke-linecap="round"/><circle cx="12.1" cy="10.1" r="6" fill="#fff"/><circle cx="12.1" cy="10.1" r="3.1" fill="none" stroke="#3a6fc0" stroke-width="0.8"/></svg></div>
</section></main></body></html>
